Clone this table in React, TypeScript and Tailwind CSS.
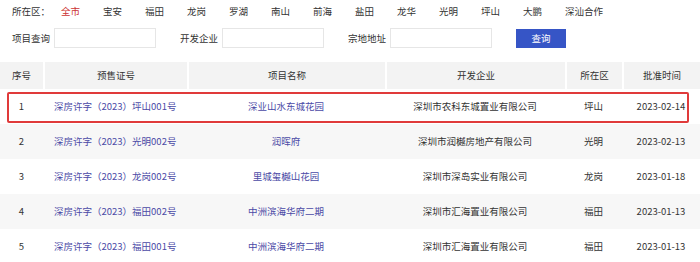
import React from 'react'

const districts = ['全市', '宝安', '福田', '龙岗', '罗湖', '南山', '前海', '盐田', '龙华', '光明', '坪山', '大鹏', '深汕合作']

const rows = [
  { no: 1, cert: '深房许字（2023）坪山001号', name: '深业山水东城花园', dev: '深圳市农科东城置业有限公司', area: '坪山', date: '2023-02-14' },
  { no: 2, cert: '深房许字（2023）光明002号', name: '润晖府', dev: '深圳市润樾房地产有限公司', area: '光明', date: '2023-02-13' },
  { no: 3, cert: '深房许字（2023）龙岗002号', name: '里城玺樾山花园', dev: '深圳市深岛实业有限公司', area: '龙岗', date: '2023-01-18' },
  { no: 4, cert: '深房许字（2023）福田002号', name: '中洲滨海华府二期', dev: '深圳市汇海置业有限公司', area: '福田', date: '2023-01-13' },
  { no: 5, cert: '深房许字（2023）福田001号', name: '中洲滨海华府二期', dev: '深圳市汇海置业有限公司', area: '福田', date: '2023-01-13' },
]

const cols = 'grid grid-cols-[43px_144px_198px_180px_57px_78px]'

const Field: React.FC<{ label: string }> = ({ label }) => (
  <div className="flex items-center">
    <span className="w-[38px] whitespace-nowrap">{label}</span>
    <input className="ml-[4px] h-[20px] w-[102px] border border-[#e6e6e6] bg-white outline-none" />
  </div>
)

const App: React.FC = () => {
  return (
    <div
      className="w-[700px] h-[262px] overflow-hidden bg-white text-[9.5px] text-[#333]"
      style={{ fontFamily: '"Noto Sans CJK SC", "Noto Sans", sans-serif' }}
    >
      {/* DISTRICT TABS */}
      <div className="flex h-[22px] items-center pl-[12px]">
        <span className="w-[49px] whitespace-nowrap">所在区：</span>
        {districts.map((d, i) => (
          <span key={d} className={`w-[42px] whitespace-nowrap ${i === 0 ? 'text-[#cc3333]' : ''}`}>
            {d}
          </span>
        ))}
      </div>

      {/* SEARCH FORM */}
      <div className="mt-[6px] flex h-[20px] items-center gap-[24px] pl-[12px]">
        <Field label="项目查询" />
        <Field label="开发企业" />
        <Field label="宗地地址" />
        <button className="h-[19px] w-[50px] bg-[#3655c6] text-white">查询</button>
      </div>

      {/* TABLE */}
      <div className="mt-[14px]">
        <div className={`${cols} h-[27px] bg-[#f3f3f3]`}>
          {['序号', '预售证号', '项目名称', '开发企业', '所在区', '批准时间'].map((h, i) => (
            <div
              key={h}
              className={`flex items-center justify-center ${i > 0 ? 'border-l-2 border-white' : ''}`}
            >
              {h}
            </div>
          ))}
        </div>
        {rows.map((r) => (
          <div key={r.no} className={`${cols} relative h-[35px] ${r.no % 2 === 0 ? 'bg-[#f7f7f7]' : 'bg-white'}`}>
            <div className="flex items-center justify-center">{r.no}</div>
            <div className="flex items-center pl-[11px] text-[#4b4aa6] whitespace-nowrap">{r.cert}</div>
            <div className="flex items-center justify-center text-[#4b4aa6]">{r.name}</div>
            <div className="flex items-center justify-center">{r.dev}</div>
            <div className="flex items-center justify-center">{r.area}</div>
            <div className="flex items-center justify-center">{r.date}</div>
            {r.no === 1 && (
              <div className="pointer-events-none absolute left-[7px] right-[11px] top-[3px] bottom-[1px] rounded-[2px] border-2 border-[#e03a3a]" />
            )}
          </div>
        ))}
      </div>
    </div>
  )
}

export default App
